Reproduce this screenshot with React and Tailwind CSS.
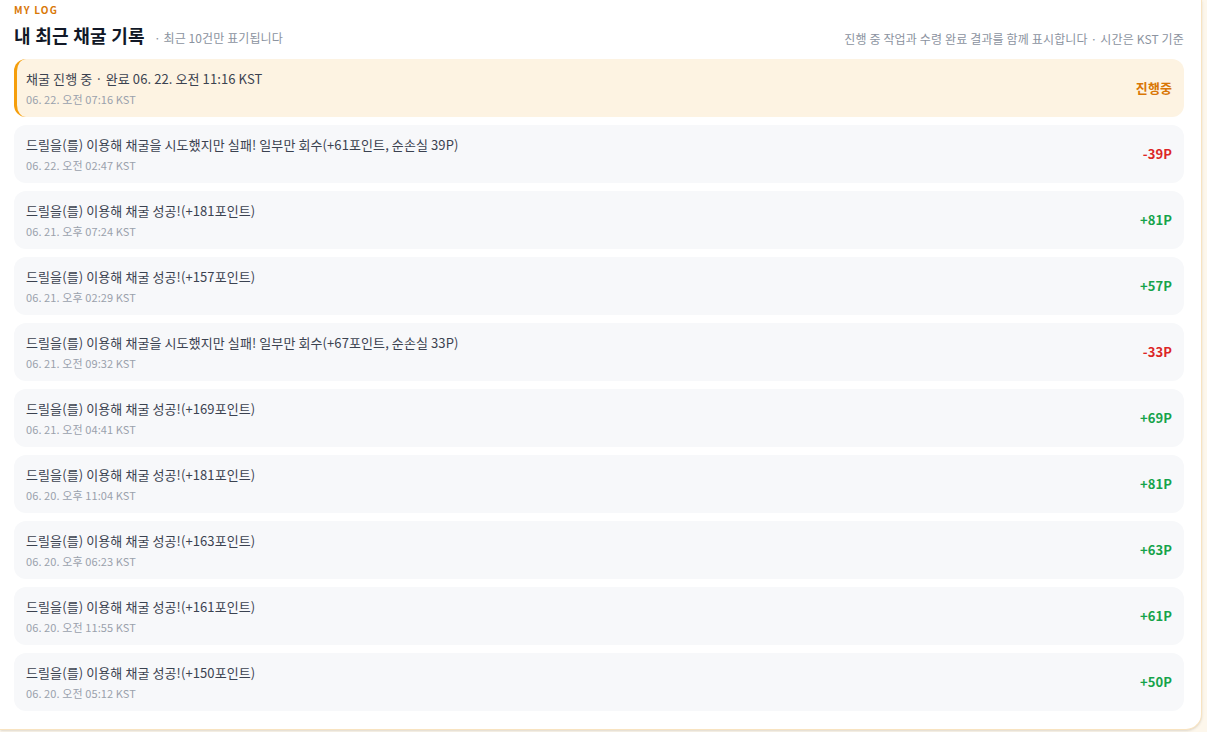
import React from "react";

const logs = [
  { text: "드릴을(를) 이용해 채굴을 시도했지만 실패! 일부만 회수(+61포인트, 순손실 39P)", date: "06. 22. 오전 02:47 KST", value: "-39P" },
  { text: "드릴을(를) 이용해 채굴 성공!(+181포인트)", date: "06. 21. 오후 07:24 KST", value: "+81P" },
  { text: "드릴을(를) 이용해 채굴 성공!(+157포인트)", date: "06. 21. 오후 02:29 KST", value: "+57P" },
  { text: "드릴을(를) 이용해 채굴을 시도했지만 실패! 일부만 회수(+67포인트, 순손실 33P)", date: "06. 21. 오전 09:32 KST", value: "-33P" },
  { text: "드릴을(를) 이용해 채굴 성공!(+169포인트)", date: "06. 21. 오전 04:41 KST", value: "+69P" },
  { text: "드릴을(를) 이용해 채굴 성공!(+181포인트)", date: "06. 20. 오후 11:04 KST", value: "+81P" },
  { text: "드릴을(를) 이용해 채굴 성공!(+163포인트)", date: "06. 20. 오후 06:23 KST", value: "+63P" },
  { text: "드릴을(를) 이용해 채굴 성공!(+161포인트)", date: "06. 20. 오전 11:55 KST", value: "+61P" },
  { text: "드릴을(를) 이용해 채굴 성공!(+150포인트)", date: "06. 20. 오전 05:12 KST", value: "+50P" },
];

function LogRow({ text, date, value }) {
  const minus = value.startsWith("-");
  return (
    <div className="flex h-[58px] items-center justify-between rounded-xl bg-[#f7f8fa] px-3">
      <div className="flex flex-col">
        <p className="text-[13px] leading-5 text-[#3b4250]">{text}</p>
        <p className="mt-[2px] text-[11px] leading-4 text-[#9aa1ac]">{date}</p>
      </div>
      <span className={"text-[13px] font-bold " + (minus ? "text-[#dc2626]" : "text-[#16a34a]")}>{value}</span>
    </div>
  );
}

export default function App() {
  return (
    <div
      className="h-[732px] w-full overflow-hidden bg-[#fdf7ec] tracking-[0.006em]"
      style={{ fontFamily: '"Noto Sans CJK KR", "Noto Sans", sans-serif' }}
    >
      <div className="mr-[5px] rounded-br-2xl border-r border-b border-[#f8e3c0] bg-white pt-[3px] pr-[17px] pb-[18px] pl-[14px] shadow-sm">
        <p className="text-[10px] font-bold leading-[14px] tracking-[0.12em] text-[#d97706]">MY LOG</p>
        <div className="mt-[5px] mb-[11px] flex items-end justify-between">
          <div className="flex items-baseline gap-[9px]">
            <h2 className="text-[18px] font-bold leading-[26px] tracking-[0.015em] text-[#111827]">내 최근 채굴 기록</h2>
            <span className="text-[12px] text-[#8b93a0]">· 최근 10건만 표기됩니다</span>
          </div>
          <p className="mb-[1px] text-[12px] leading-4 tracking-[0.012em] text-[#8b93a0]">
            진행 중 작업과 수령 완료 결과를 함께 표시합니다 · 시간은 KST 기준
          </p>
        </div>
        <div className="flex flex-col gap-2">
          <div className="flex h-[58px] items-center justify-between rounded-xl border-l-[3px] border-[#f59e0b] bg-[#fdf3e2] pr-3 pl-[9px]">
            <div className="flex flex-col">
              <p className="text-[13px] leading-5 text-[#3b4250]">채굴 진행 중 · 완료 06. 22. 오전 11:16 KST</p>
              <p className="mt-[2px] text-[11px] leading-4 text-[#9aa1ac]">06. 22. 오전 07:16 KST</p>
            </div>
            <span className="text-[13px] font-bold text-[#d97706]">진행중</span>
          </div>
          {logs.map((l, i) => (
            <LogRow key={i} {...l} />
          ))}
        </div>
      </div>
    </div>
  );
}
